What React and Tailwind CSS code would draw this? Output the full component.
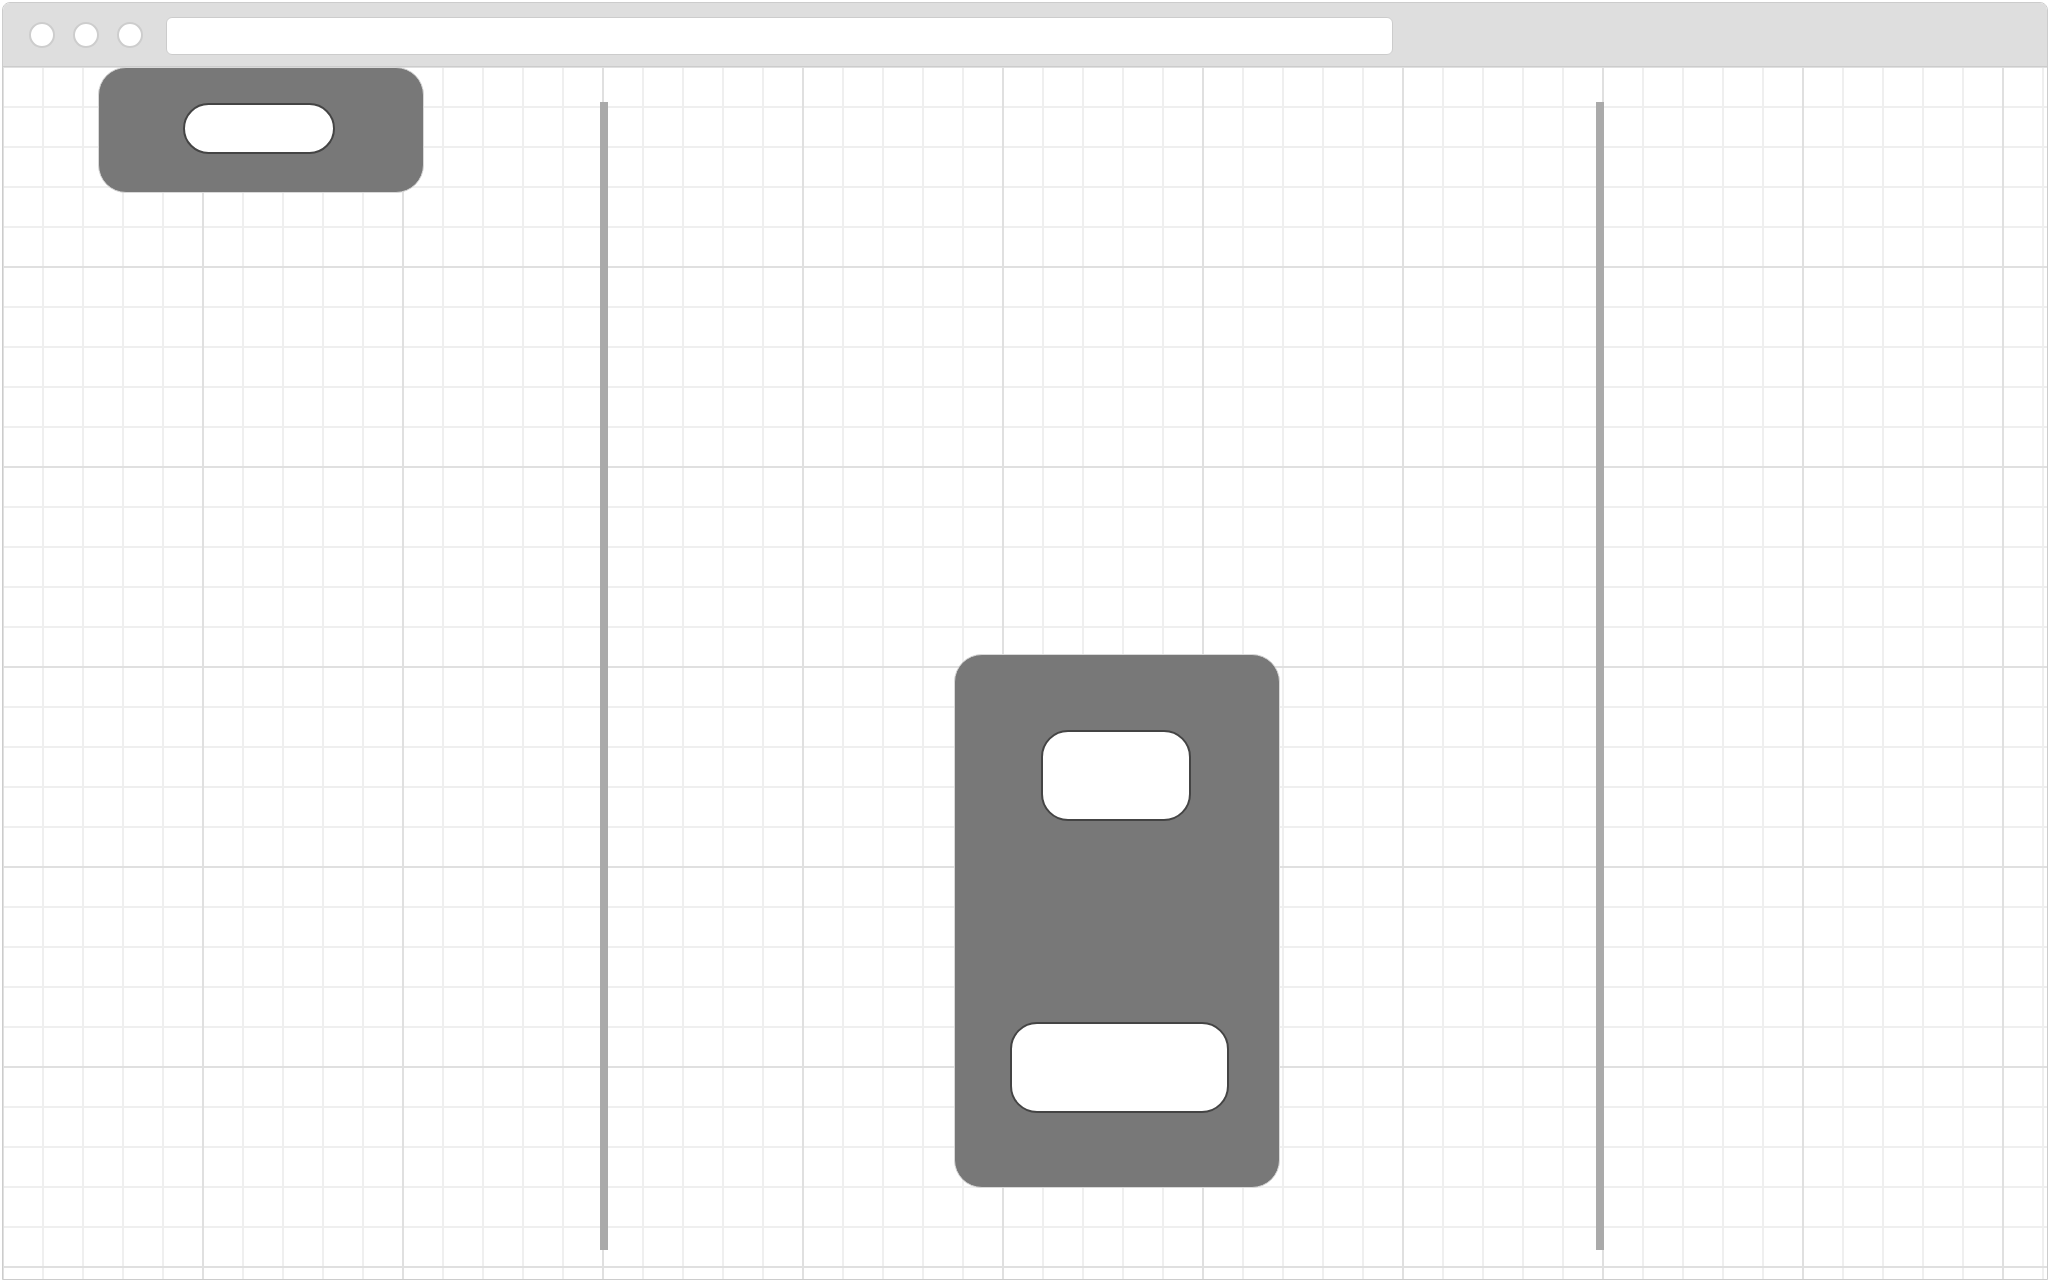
export default function App() {
  return (
    <div className="w-[2050px] h-[1282px] bg-white p-[2px] font-['Liberation_Sans',sans-serif]">
      <div className="h-full flex flex-col border border-[#cccccc] rounded-t-lg overflow-hidden">

        {/* title bar */}
        <div className="h-[64px] shrink-0 bg-[#dedede] border-b border-[#cccccc] flex items-center pl-[26px]">
          <div className="flex gap-[18px]">
            <div className="w-[26px] h-[26px] rounded-full bg-white border-2 border-[#cdcdcd]" />
            <div className="w-[26px] h-[26px] rounded-full bg-white border-2 border-[#cdcdcd]" />
            <div className="w-[26px] h-[26px] rounded-full bg-white border-2 border-[#cdcdcd]" />
          </div>
          <div className="ml-[23px] mt-[2px] w-[1227px] h-[38px] rounded-md bg-white border border-[#cccccc]" />
        </div>

        {/* canvas */}
        <div className="flex-1 flex items-start bg-white bg-[linear-gradient(to_right,#e0e0e0_2px,transparent_2px),linear-gradient(to_bottom,#e0e0e0_2px,transparent_2px),linear-gradient(to_right,#efefef_2px,transparent_2px),linear-gradient(to_bottom,#efefef_2px,transparent_2px)] [background-size:200px_200px,200px_200px,40px_40px,40px_40px] [background-position:199px_199px,199px_199px,39px_39px,39px_39px]">

          <div className="w-[597px] shrink-0 pl-[95px]">
            <div className="w-[326px] h-[126px] rounded-[28px] bg-[#787878] border border-[#d9d9d9] flex items-center justify-center">
              <div className="w-[152px] h-[51px] rounded-[26px] bg-white border-2 border-[#444444] -ml-[4px] -mt-[4px]" />
            </div>
          </div>

          <div className="w-[8px] h-[1148px] mt-[35px] shrink-0 bg-[#aaaaaa]" />

          <div className="w-[988px] shrink-0 pl-[346px] pt-[587px]">
            <div className="w-[326px] h-[534px] rounded-[28px] bg-[#787878] border border-[#d9d9d9] flex flex-col items-center justify-between pt-[75px] pb-[74px]">
              <div className="w-[150px] h-[91px] rounded-[27px] bg-white border-2 border-[#444444] -ml-[2px]" />
              <div className="w-[219px] h-[91px] rounded-[27px] bg-white border-2 border-[#444444] ml-[5px]" />
            </div>
          </div>

          <div className="w-[8px] h-[1148px] mt-[35px] shrink-0 bg-[#aaaaaa]" />
        </div>
      </div>
    </div>
  )
}
